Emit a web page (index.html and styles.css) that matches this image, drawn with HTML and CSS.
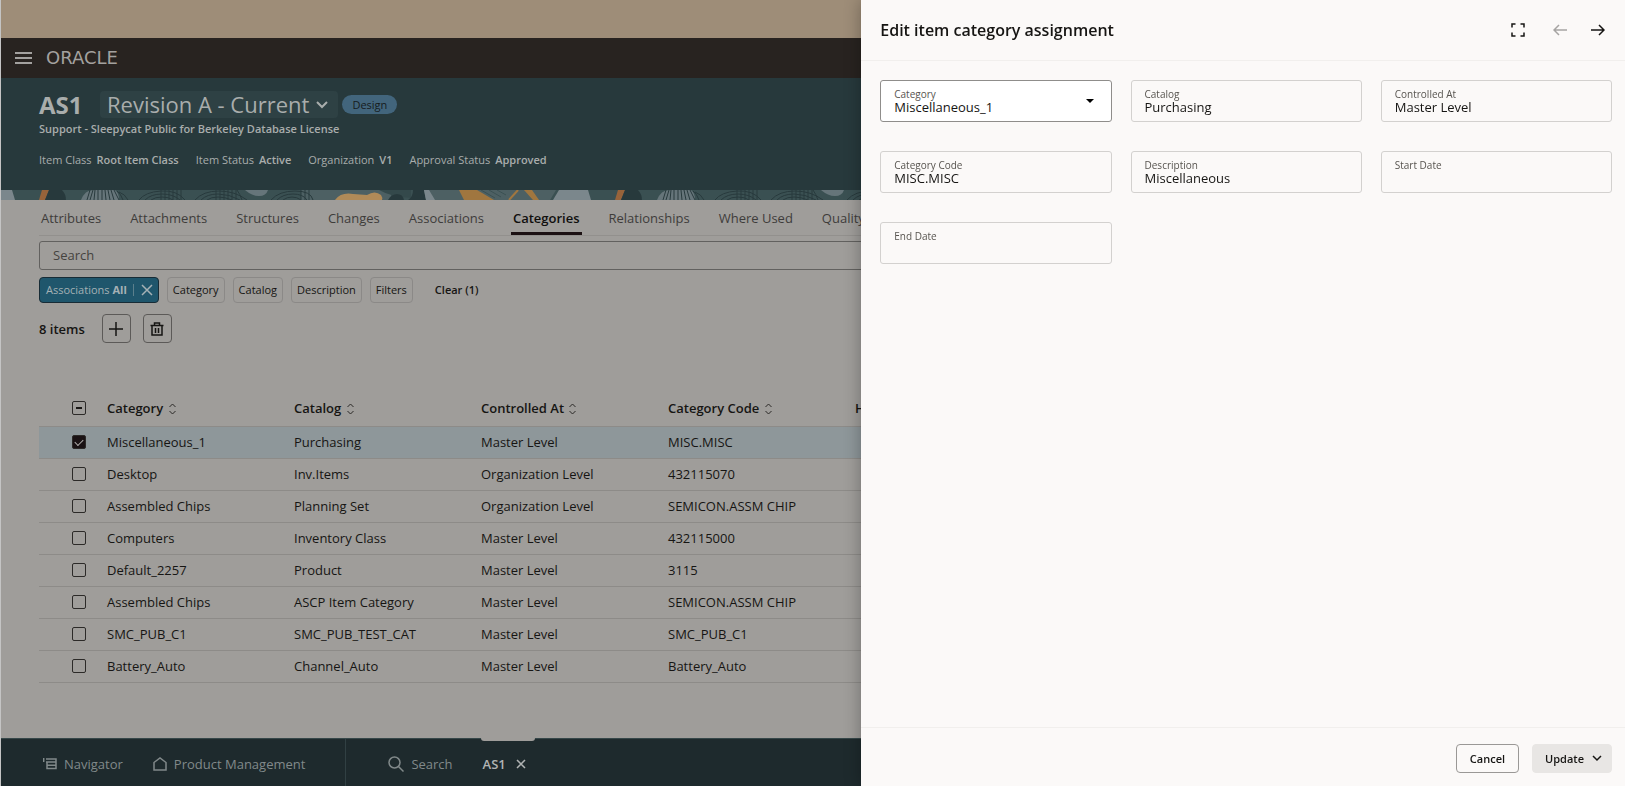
FILE: index.html
```html
<!DOCTYPE html>
<html lang="en">
<head>
  <meta charset="UTF-8" />
  <title>AS1 - Categories</title>
  <link rel="stylesheet" href="styles.css">
</head>
<body>
  <div class="page">
    <div class="banner"></div>

    <header class="topbar">
      <button class="icon-btn" aria-label="Menu">
        <svg width="17" height="14" viewBox="0 0 17 14" stroke="currentColor" stroke-width="2"><path d="M0 2h17M0 7h17M0 12h17" /></svg>
      </button>
      <span class="brand">ORACLE</span>
    </header>

    <section class="item-header">
      <div class="title-row">
        <h1>AS1</h1>
        <button class="revision">Revision A - Current
          <svg width="12" height="8" viewBox="0 0 12 8" fill="none" stroke="currentColor" stroke-width="2"><path d="M1 1l5 5 5-5" /></svg>
        </button>
        <span class="pill">Design</span>
      </div>
      <p class="subtitle">Support - Sleepycat Public for Berkeley Database License</p>
      <dl class="meta">
        <div><dt>Item Class</dt><dd>Root Item Class</dd></div>
        <div><dt>Item Status</dt><dd>Active</dd></div>
        <div><dt>Organization</dt><dd>V1</dd></div>
        <div><dt>Approval Status</dt><dd>Approved</dd></div>
      </dl>
    </section>

    <svg class="strip" height="10" aria-hidden="true">
      <defs>
        <pattern id="art" width="576" height="10" patternUnits="userSpaceOnUse">
          <rect width="576" height="10" fill="#3a5052" />
          <path d="M0 0h11l3 10H0z" fill="#7b878c" />
          <path d="M41 0h7l-4 10h-6z" fill="#97633a" />
          <path d="M48 0h13q4 4 4 10H44z" fill="#27393c" />
          <path d="M80 10Q84 0 92 0h22q4 3 4 10z" fill="#66757a" />
          <path d="M244 0h23q-2 6-9 6t-14-6z" fill="#66757a" />
          <path d="M300 0h90v10h-90z" fill="#4d6063" />
          <path d="M378 0h32v8q-20-1-32-8z" fill="#34494b" />
          <path d="M334 10q6-8 18-6l14 1q8-5 14 0 2 3 1 5z" fill="#b08a58" />
          <path d="M387 10q3-6 9-6t7 6z" fill="#27393c" />
          <path d="M412 0h11l2 10h-18q5-3 5-10z" fill="#27393c" />
          <path d="M423 0h132l-6 10H425z" fill="#4d6063" />
          <path d="M423 0h5l6 10h-9z" fill="#7b878c" />
          <path d="M458 0h18l17 10h-30z" fill="#a0763f" />
          <path d="M523 0h8l7 10h-6z" fill="#a0763f" />
          <path d="M517 0l-9 10" stroke="#a0763f" stroke-width="2" />
          <path d="M480 0l14 8M488 0l12 7M496 0l9 5" stroke="#3a5052" />
          <path d="M558 0h18v10h-24z" fill="#7b878c" />
          <g fill="none" stroke="#27393c">
            <path d="M86 10l3-10M89 10l3-10M93 10l1-10M97 10V0M101 10V0M105 10l-1-10M109 10l-2-10M113 10l-3-10M118 10l-5-10M122 10q-2-6-6-9M127 10q-3-6-9-8" />
            <path d="M138 10q6-8 22-9t24 9M144 10q6-6 17-6t18 6M150 10q4-3 11-3t11 3" />
            <path d="M160 10V0M164 10V0M168 10V0M172 10V0M176 10V0M180 10V0" />
            <path d="M194 10q8-9 24-9t28 9M200 10q6-6 17-6t22 6M206 10q4-3 11-3t14 3" />
            <path d="M215 10V0M219 10V0M223 10V0M227 10V0M231 10V0M235 10V0M241 10q-2-6-5-10" />
            <path d="M270 10q8-9 24-9t18 9M276 10q6-6 16-6t14 6M282 10q4-3 9-3t9 3M300 10V0M304 10V0M308 10V0" />
          </g>
        </pattern>
      </defs>
      <rect width="100%" height="10" fill="url(#art)" />
    </svg>

    <main class="content">
      <nav class="tabs">
        <a href="#">Attributes</a>
        <a href="#">Attachments</a>
        <a href="#">Structures</a>
        <a href="#">Changes</a>
        <a href="#">Associations</a>
        <a href="#" class="active">Categories</a>
        <a href="#">Relationships</a>
        <a href="#">Where Used</a>
        <a href="#">Quality</a>
      </nav>

      <input class="search" type="search" placeholder="Search" aria-label="Search" />

      <div class="chips">
        <button class="chip selected">Associations <b>All</b>
          <svg width="12" height="12" viewBox="0 0 12 12" stroke="currentColor" stroke-width="1.500"><path d="M1 1l10 10M11 1L1 11" /></svg>
        </button>
        <button class="chip">Category</button>
        <button class="chip">Catalog</button>
        <button class="chip">Description</button>
        <button class="chip">Filters</button>
        <button class="clear">Clear (1)</button>
      </div>

      <div class="toolbar">
        <span>8 items</span>
        <button class="square" aria-label="Add">
          <svg width="14" height="14" viewBox="0 0 14 14" stroke="currentColor" stroke-width="1.500"><path d="M7 0v14M0 7h14" /></svg>
        </button>
        <button class="square" aria-label="Delete">
          <svg width="14" height="14" viewBox="0 0 14 14" fill="none" stroke="currentColor" stroke-width="1.500"><path d="M.5 3.500h13M4.500 3V1h5v2M2 4v9h10V4M5.500 6v5M8.500 6v5" /></svg>
        </button>
      </div>

      <table class="grid">
        <thead>
          <tr>
            <th class="check"><input type="checkbox" class="mixed" aria-label="Select all" /></th>
            <th>Category <svg class="sort" viewBox="0 0 8 12"><path d="M1 4l3-3 3 3M1 8l3 3 3-3" /></svg></th>
            <th>Catalog <svg class="sort" viewBox="0 0 8 12"><path d="M1 4l3-3 3 3M1 8l3 3 3-3" /></svg></th>
            <th>Controlled At <svg class="sort" viewBox="0 0 8 12"><path d="M1 4l3-3 3 3M1 8l3 3 3-3" /></svg></th>
            <th>Category Code <svg class="sort" viewBox="0 0 8 12"><path d="M1 4l3-3 3 3M1 8l3 3 3-3" /></svg></th>
            <th class="rest">Hierarchy</th>
          </tr>
        </thead>
        <tbody>
          <tr class="selected"><td class="check"><input type="checkbox" checked aria-label="Miscellaneous_1" /></td><td>Miscellaneous_1</td><td>Purchasing</td><td>Master Level</td><td>MISC.MISC</td><td></td></tr>
          <tr><td class="check"><input type="checkbox" aria-label="Desktop" /></td><td>Desktop</td><td>Inv.Items</td><td>Organization Level</td><td>432115070</td><td></td></tr>
          <tr><td class="check"><input type="checkbox" aria-label="Assembled Chips" /></td><td>Assembled Chips</td><td>Planning Set</td><td>Organization Level</td><td>SEMICON.ASSM CHIP</td><td></td></tr>
          <tr><td class="check"><input type="checkbox" aria-label="Computers" /></td><td>Computers</td><td>Inventory Class</td><td>Master Level</td><td>432115000</td><td></td></tr>
          <tr><td class="check"><input type="checkbox" aria-label="Default_2257" /></td><td>Default_2257</td><td>Product</td><td>Master Level</td><td>3115</td><td></td></tr>
          <tr><td class="check"><input type="checkbox" aria-label="Assembled Chips" /></td><td>Assembled Chips</td><td>ASCP Item Category</td><td>Master Level</td><td>SEMICON.ASSM CHIP</td><td></td></tr>
          <tr><td class="check"><input type="checkbox" aria-label="SMC_PUB_C1" /></td><td>SMC_PUB_C1</td><td>SMC_PUB_TEST_CAT</td><td>Master Level</td><td>SMC_PUB_C1</td><td></td></tr>
          <tr><td class="check"><input type="checkbox" aria-label="Battery_Auto" /></td><td>Battery_Auto</td><td>Channel_Auto</td><td>Master Level</td><td>Battery_Auto</td><td></td></tr>
        </tbody>
      </table>
    </main>

    <footer class="bottombar">
      <div class="nav-group">
        <a href="#"><svg width="14" height="12" viewBox="0 0 14 12" fill="none" stroke="currentColor" stroke-width="1.500"><path d="M.7 0v4M3 1h10v3H3M4 4v6.500h9V4M4 7.300h9" /></svg>Navigator</a>
        <a href="#"><svg width="14" height="14" viewBox="0 0 14 14" fill="none" stroke="currentColor" stroke-width="1.500"><path d="M1 5.500L7 1l6 4.500V13H1z" /></svg>Product Management</a>
      </div>
      <div class="open-group">
        <a href="#"><svg width="16" height="16" viewBox="0 0 16 16" fill="none" stroke="currentColor" stroke-width="1.500"><circle cx="6.500" cy="6.500" r="5.500" /><path d="M10.500 10.500l5 5" /></svg>Search</a>
        <a href="#" class="current">AS1 <svg width="10" height="10" viewBox="0 0 10 10" stroke="currentColor" stroke-width="1.500"><path d="M1 1l8 8M9 1L1 9" /></svg></a>
      </div>
    </footer>
  </div>

  <aside class="drawer">
    <header class="drawer-head">
      <h2>Edit item category assignment</h2>
      <button class="icon-btn" aria-label="Expand">
        <svg width="14" height="14" viewBox="0 0 14 14" fill="none" stroke="currentColor" stroke-width="1.500"><path d="M1 4.500V1h3.500M9.500 1H13v3.500M13 9.500V13H9.500M4.500 13H1V9.500" /></svg>
      </button>
      <button class="icon-btn" aria-label="Previous" disabled>
        <svg width="14" height="12" viewBox="0 0 14 12" fill="none" stroke="currentColor" stroke-width="1.500"><path d="M14 6H1M6 1L1 6l5 5" /></svg>
      </button>
      <button class="icon-btn" aria-label="Next">
        <svg width="14" height="12" viewBox="0 0 14 12" fill="none" stroke="currentColor" stroke-width="1.500"><path d="M0 6h13M8 1l5 5-5 5" /></svg>
      </button>
    </header>

    <form class="fields">
      <div class="field editable">
        <label for="category">Category</label>
        <select id="category"><option>Miscellaneous_1</option></select>
        <svg class="caret" width="8" height="4" viewBox="0 0 8 4"><path d="M0 0h8L4 4z" /></svg>
      </div>
      <div class="field">
        <label for="catalog">Catalog</label>
        <input id="catalog" type="text" value="Purchasing" readonly />
      </div>
      <div class="field">
        <label for="controlled">Controlled At</label>
        <input id="controlled" type="text" value="Master Level" readonly />
      </div>
      <div class="field">
        <label for="code">Category Code</label>
        <input id="code" type="text" value="MISC.MISC" readonly />
      </div>
      <div class="field">
        <label for="description">Description</label>
        <input id="description" type="text" value="Miscellaneous" readonly />
      </div>
      <div class="field">
        <label for="start">Start Date</label>
        <input id="start" type="text" readonly />
      </div>
      <div class="field">
        <label for="end">End Date</label>
        <input id="end" type="text" readonly />
      </div>
    </form>

    <footer class="drawer-foot">
      <button class="btn">Cancel</button>
      <button class="btn primary">Update
        <svg width="10" height="7" viewBox="0 0 10 7" fill="none" stroke="currentColor" stroke-width="1.500"><path d="M1 1l4 4 4-4" /></svg>
      </button>
    </footer>
  </aside>
</body>
</html>
```
FILE: styles.css
```css
* {
  box-sizing: border-box;
}

body {
  margin: 0;
  font-family: "Open Sans", "Noto Sans", sans-serif;
  font-size: 13px;
  line-height: 16px;
  color: #161513;
  overflow: hidden;
}

h1, h2, p, dl, dd {
  margin: 0;
}

a {
  color: inherit;
  text-decoration: none;
}

button, input, select {
  font: inherit;
  color: inherit;
}

button {
  padding: 0;
  border: 0;
  background: none;
  white-space: nowrap;
}

svg {
  flex: none;
}

.page {
  display: flex;
  flex-direction: column;
  height: 100vh;
  border-left: 1px solid #c4c4c4;
  background: #9f9d9a;
}

.banner {
  height: 38px;
  background: #9e8d78;
}

.icon-btn {
  display: flex;
  align-items: center;
}

.topbar {
  display: flex;
  align-items: center;
  gap: 14px;
  height: 40px;
  padding-left: 14px;
  background: #282320;
  color: #a3a19f;
}

.brand {
  font-family: "DejaVu Sans", sans-serif;
  font-size: 18px;
}

/* item header */
.item-header {
  height: 112px;
  padding: 13px 38px 0;
  background: #27393c;
  color: #a9adac;
  font-size: 11px;
}

.title-row {
  display: flex;
  align-items: center;
  height: 27px;
}

h1 {
  width: 61px;
  font-size: 24px;
  line-height: 27px;
}

.revision {
  display: flex;
  align-items: center;
  gap: 7px;
  height: 27px;
  padding: 0 10px 0 7px;
  border-radius: 4px;
  background: #2e4144;
  font-size: 22px;
  line-height: 27px;
}

.pill {
  margin-left: 4px;
  padding: 0 10px;
  border-radius: 10px;
  background: #42657c;
  color: #161c20;
  line-height: 19px;
}

.subtitle {
  margin-top: 3px;
  font-weight: 600;
}

.meta {
  display: flex;
  gap: 17px;
  margin-top: 15px;
}

.meta div {
  display: flex;
  gap: 5px;
}

.meta dd {
  font-weight: 600;
}

.strip {
  display: block;
  width: 100%;
}

/* content */
.content {
  flex: 1;
  padding-left: 38px;
}

.tabs {
  display: flex;
  gap: 25px;
  height: 36px;
  border-bottom: 1px solid #92908d;
  color: #3e3c3a;
  font-weight: 500;
}

.tabs a {
  padding: 10px 2px 0;
}

.tabs .active {
  border-bottom: 3px solid #1c1113;
  color: #100f0e;
  font-weight: 600;
}

.search {
  display: block;
  width: 100%;
  height: 29px;
  margin: 5px 0 7px;
  padding: 0 13px 2px;
  border: 1px solid #62615f;
  border-radius: 3px;
  background: none;
}

.search::placeholder {
  color: #45433f;
}

.chips {
  display: flex;
  gap: 8px;
  height: 26px;
  font-size: 11px;
}

.chip {
  padding: 0 5px;
  border: 1px solid #8b8987;
  border-radius: 4px;
}

.chip.selected {
  display: flex;
  align-items: center;
  gap: 3px;
  padding-left: 6px;
  border-color: #182c36;
  background: #1f566c;
  color: #a5b1b5;
}

.chip.selected svg {
  box-sizing: content-box;
  margin-left: 3px;
  padding-left: 7px;
  border-left: 1px solid #5b7f8c;
}

.clear {
  margin-left: 14px;
  font-weight: 600;
}

.toolbar {
  display: flex;
  align-items: center;
  margin-top: 11px;
  font-weight: 600;
}

.square {
  display: flex;
  align-items: center;
  justify-content: center;
  width: 29px;
  height: 29px;
  margin-left: 12px;
  border: 1px solid #5c5a58;
  border-radius: 4px;
}

.toolbar span + .square {
  margin-left: 17px;
}

.grid {
  width: 100%;
  margin-top: 46px;
  border-collapse: collapse;
  table-layout: fixed;
}

.grid th, .grid td {
  width: 187px;
  height: 32px;
  padding: 0;
  border-bottom: 1px solid #8d8b88;
  text-align: left;
  white-space: nowrap;
}

.grid th {
  height: 37px;
  padding-top: 2px;
  font-weight: 600;
}

.grid .check {
  width: 68px;
  padding-left: 33px;
}

.grid .rest {
  width: auto;
}

.grid .selected {
  background: #8e979a;
}

.sort {
  width: 9px;
  height: 12px;
  margin-left: 1px;
  vertical-align: -2px;
  fill: none;
  stroke: #2a2826;
}

input[type="checkbox"] {
  appearance: none;
  display: block;
  width: 14px;
  height: 14px;
  margin: 0;
  border: 1px solid #2c2a28;
  border-radius: 2px;
}

input[type="checkbox"]:checked {
  background: #1a1214;
}

input[type="checkbox"]:checked::before {
  content: "";
  display: block;
  width: 7px;
  height: 4px;
  margin: 3px 2px;
  border: solid #b0aeac;
  border-width: 0 0 1px 1px;
  transform: rotate(-45deg);
}

input.mixed::before {
  content: "";
  display: block;
  height: 2px;
  margin: 5px 3px;
  background: #1a1816;
}

/* bottom bar */
.bottombar {
  display: flex;
  height: 48px;
  border-top: 1px solid #364749;
  background: #1e2a2d;
  color: #81898a;
  font-weight: 500;
}

.nav-group, .open-group {
  display: flex;
  align-items: center;
  gap: 30px;
  padding: 2px 40px 0 42px;
}

.nav-group {
  border-right: 1px solid #314043;
}

.bottombar a {
  display: flex;
  align-items: center;
  gap: 7px;
}

.bottombar .current {
  position: relative;
  gap: 10px;
  color: #b0b3b3;
  font-weight: 600;
}

.bottombar .current::before {
  content: "";
  position: absolute;
  top: -18px;
  left: -2px;
  width: 54px;
  height: 3px;
  border-radius: 0 0 3px 3px;
  background: #9f9d9a;
}

/* drawer */
.drawer {
  position: fixed;
  top: 0;
  right: 0;
  bottom: 0;
  display: flex;
  flex-direction: column;
  width: 47vw;
  background: #fbf9f8;
  box-shadow: 0 0 16px rgba(0, 0, 0, 0.3);
}

.drawer-head {
  display: flex;
  align-items: center;
  gap: 24px;
  height: 61px;
  padding: 0 20px 0 19px;
  border-bottom: 1px solid #f1efed;
}

.drawer-head h2 {
  flex: 1;
  font-size: 16px;
  font-weight: 600;
  line-height: 20px;
}

.drawer-head button + button:disabled {
  margin-left: 4px;
  color: #a6a4a2;
}

.fields {
  flex: 1;
  display: grid;
  grid-template-columns: repeat(3, 1fr);
  align-content: start;
  gap: 29px 19px;
  padding: 19px 13px 0 19px;
}

.field {
  position: relative;
  display: flex;
  flex-direction: column;
  height: 42px;
  padding: 7px 13px;
  border: 1px solid #d3d1cf;
  border-radius: 3px;
}

.field.editable {
  border-color: #8f8d8b;
  background: #fff;
}

.field label {
  color: #57544f;
  font-size: 10px;
  line-height: 12px;
}

.field input, .field select {
  appearance: none;
  width: 100%;
  height: 16px;
  margin: -1px 0 0;
  padding: 0;
  border: 0;
  outline: 0;
  background: none;
}

.caret {
  position: absolute;
  top: 18px;
  right: 17px;
}

.drawer-foot {
  display: flex;
  justify-content: flex-end;
  gap: 13px;
  height: 59px;
  padding: 16px 13px 0;
  border-top: 1px solid #f1efed;
}

.btn {
  display: flex;
  align-items: center;
  gap: 8px;
  height: 29px;
  padding: 0 13px;
  border: 1px solid #9a9896;
  border-radius: 4px;
  font-size: 11px;
  font-weight: 600;
}

.btn.primary {
  padding: 0 9px 0 12px;
  border-color: #e8e6e4;
  background: #e8e6e4;
}
```
